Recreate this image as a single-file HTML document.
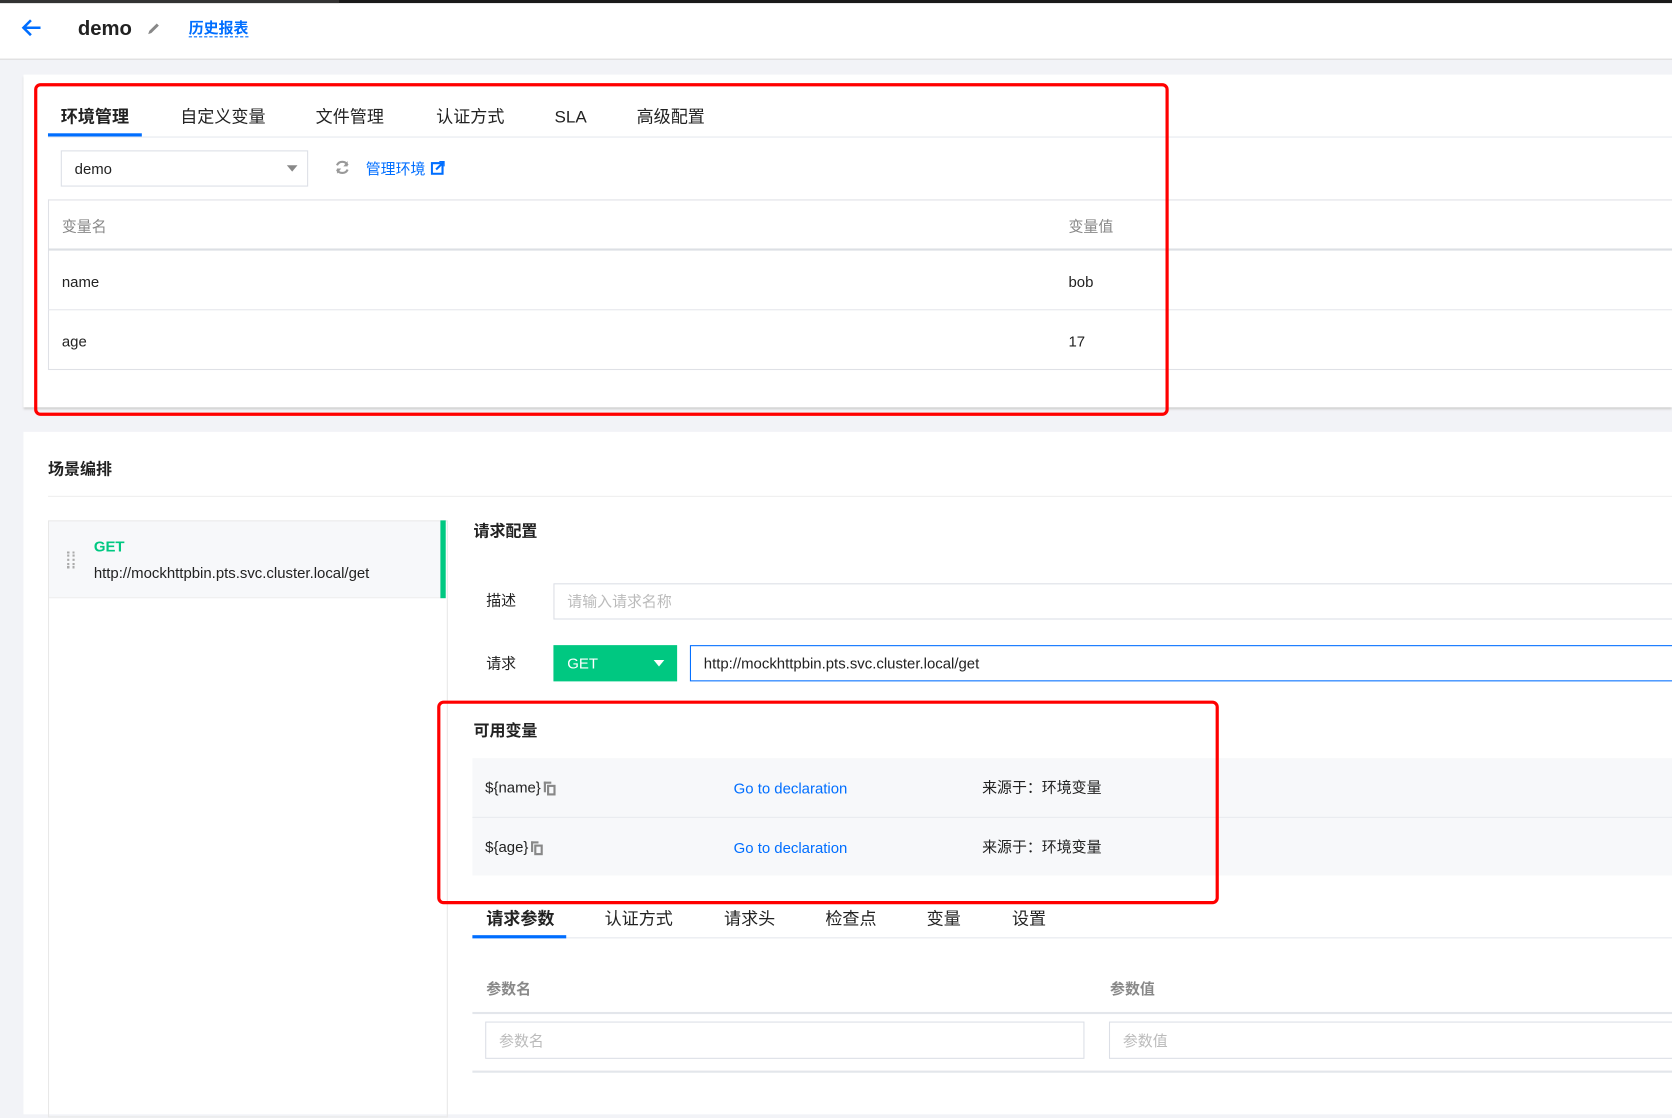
<!DOCTYPE html>
<html><head><meta charset="utf-8"><style>
*{box-sizing:border-box;margin:0;padding:0}
html,body{width:1672px;height:1083px;overflow:hidden;background:#f2f3f7}
body{font-family:"Liberation Sans","Noto Sans CJK SC",sans-serif;color:#222}
#w{position:absolute;left:0;top:0;width:1568px;height:1016px;transform:scale(1.06633);transform-origin:0 0}
.a{position:absolute;white-space:nowrap}
.t{font-size:14px;line-height:14px}
.blue{color:#006eff}
.gray{color:#888}
.b{font-weight:bold}
</style></head><body><div id="w">
<div class="a" style="left:0;top:0;width:1568px;height:3px;background:#1a1a1a"></div>
<div class="a" style="left:0;top:0;width:318px;height:3px;background:#333"></div>
<div class="a" style="left:0;top:3px;width:1568px;height:53px;background:#fff;border-bottom:1px solid #d8d8d8"></div>
<svg class="a" style="left:20px;top:17px" width="20" height="18" viewBox="0 0 20 18"><path d="M18 9H3M9 2L2 9l7 7" stroke="#006eff" stroke-width="2.4" fill="none"/></svg>
<div class="a b" style="left:73px;top:18px;font-size:19px;line-height:20px">demo</div>
<svg class="a" style="left:137px;top:20px" width="14" height="14" viewBox="0 0 14 14"><path d="M2 12l1-3 7-7 2 2-7 7z" fill="#888"/></svg>
<div class="a b blue" style="left:177px;top:18px;font-size:14px;line-height:16px;border-bottom:1px dashed #006eff">历史报表</div>

<div class="a" style="left:22px;top:70px;width:1546px;height:312px;background:#fff;box-shadow:0 2px 2px #ccc"></div>
<div class="a" style="left:45px;top:128px;width:1523px;height:1px;background:#e5e8ee"></div>
<div class="a" style="left:45px;top:125px;width:88px;height:3px;background:#006eff"></div>
<div class="a b" style="left:57px;top:102px;font-size:16px;line-height:18px">环境管理</div>
<div class="a" style="left:169px;top:102px;font-size:16px;line-height:18px">自定义变量</div>
<div class="a" style="left:296px;top:102px;font-size:16px;line-height:18px">文件管理</div>
<div class="a" style="left:409px;top:102px;font-size:16px;line-height:18px">认证方式</div>
<div class="a" style="left:520px;top:102px;font-size:16px;line-height:18px">SLA</div>
<div class="a" style="left:597px;top:102px;font-size:16px;line-height:18px">高级配置</div>
<div class="a" style="left:57px;top:141px;width:232px;height:34px;border:1px solid #dcdfe6"></div>
<div class="a t" style="left:70px;top:151px">demo</div>
<div class="a" style="left:269px;top:155px;border:5px solid transparent;border-top:6px solid #888"></div>
<svg class="a" style="left:313px;top:149px" width="16" height="16" viewBox="0 0 16 16"><path d="M13 6A5.5 5.5 0 0 0 3 6M3 10a5.5 5.5 0 0 0 10 0" stroke="#999" stroke-width="2" fill="none"/><path d="M13 2v5H9z M3 14V9h4z" fill="#999"/></svg>
<div class="a t blue" style="left:343px;top:151px">管理环境</div>
<svg class="a" style="left:404px;top:151px" width="13" height="13" viewBox="0 0 13 13"><rect x="1" y="2" width="10" height="10" fill="none" stroke="#006eff" stroke-width="2"/><path d="M5 8L12 1M8 0h5v5" stroke="#006eff" stroke-width="2" fill="none"/></svg>
<div class="a" style="left:45px;top:187px;width:1523px;height:160px;border:1px solid #dfe1e6;border-right:none"></div>
<div class="a" style="left:45px;top:233px;width:1523px;height:2px;background:#dcdfe4"></div>
<div class="a" style="left:45px;top:290px;width:1523px;height:1px;background:#e5e6ec"></div>
<div class="a t gray" style="left:58px;top:205px">变量名</div>
<div class="a t gray" style="left:1002px;top:205px">变量值</div>
<div class="a t" style="left:58px;top:257px">name</div>
<div class="a t" style="left:1002px;top:257px">bob</div>
<div class="a t" style="left:58px;top:313px">age</div>
<div class="a t" style="left:1002px;top:313px">17</div>
<div class="a" style="left:32px;top:78px;width:1064px;height:312px;border:3px solid #f00;border-radius:6px"></div>

<div class="a" style="left:22px;top:405px;width:1546px;height:640px;background:#fff"></div>
<div class="a b" style="left:45px;top:433px;font-size:15px;line-height:16px">场景编排</div>
<div class="a" style="left:45px;top:465px;width:1523px;height:1px;background:#eee"></div>
<div class="a" style="left:45px;top:488px;width:375px;height:560px;border:1px solid #e8e8e8"></div>
<div class="a" style="left:46px;top:489px;width:368px;height:72px;background:#f7f8fa;border-bottom:1px solid #eee"></div>
<div class="a" style="left:413px;top:488px;width:5px;height:73px;background:#00c881"></div>
<div class="a" style="left:63px;top:517px;width:2px;height:16px;border-left:2px dotted #aaa"></div>
<div class="a" style="left:68px;top:517px;width:2px;height:16px;border-left:2px dotted #aaa"></div>
<div class="a b" style="left:88px;top:504px;font-size:14px;color:#00c881">GET</div>
<div class="a t" style="left:88px;top:530px">http://mockhttpbin.pts.svc.cluster.local/get</div>

<div class="a b" style="left:444px;top:491px;font-size:15px;line-height:16px">请求配置</div>
<div class="a t" style="left:456px;top:556px">描述</div>
<div class="a" style="left:519px;top:547px;width:1060px;height:34px;border:1px solid #dcdfe6"></div>
<div class="a t" style="left:532px;top:557px;color:#bbb">请输入请求名称</div>
<div class="a t" style="left:456px;top:615px">请求</div>
<div class="a" style="left:519px;top:605px;width:116px;height:34px;background:#00c881"></div>
<div class="a t" style="left:532px;top:615px;color:#fff">GET</div>
<div class="a" style="left:613px;top:619px;border:5px solid transparent;border-top:6px solid #fff"></div>
<div class="a" style="left:647px;top:605px;width:930px;height:34px;border:1px solid #006eff"></div>
<div class="a t" style="left:660px;top:615px">http://mockhttpbin.pts.svc.cluster.local/get</div>

<div class="a b" style="left:444px;top:678px;font-size:15px;line-height:16px">可用变量</div>
<div class="a" style="left:443px;top:711px;width:1125px;height:110px;background:#f7f8fa"></div>
<div class="a" style="left:443px;top:766px;width:1125px;height:1px;background:#e8eaee"></div>
<div class="a t" style="left:455px;top:731px">${name}</div>
<div class="a" style="left:510px;top:733px;width:7px;height:10px;border:2px solid #888;border-right:none;border-bottom:none"></div>
<div class="a" style="left:513px;top:736px;width:8px;height:10px;border:2px solid #888"></div>
<div class="a t" style="left:455px;top:787px">${age}</div>
<div class="a" style="left:498px;top:789px;width:7px;height:10px;border:2px solid #888;border-right:none;border-bottom:none"></div>
<div class="a" style="left:501px;top:792px;width:8px;height:10px;border:2px solid #888"></div>
<div class="a t blue" style="left:688px;top:732px">Go to declaration</div>
<div class="a t blue" style="left:688px;top:788px">Go to declaration</div>
<div class="a t" style="left:921px;top:731px">来源于：环境变量</div>
<div class="a t" style="left:921px;top:787px">来源于：环境变量</div>
<div class="a" style="left:410px;top:657px;width:733px;height:191px;border:3px solid #f00;border-radius:6px"></div>

<div class="a" style="left:443px;top:879px;width:1125px;height:1px;background:#e5e8ee"></div>
<div class="a" style="left:443px;top:877px;width:88px;height:3px;background:#006eff"></div>
<div class="a b" style="left:456px;top:854px;font-size:16px;line-height:18px">请求参数</div>
<div class="a" style="left:567px;top:854px;font-size:16px;line-height:18px">认证方式</div>
<div class="a" style="left:679px;top:854px;font-size:16px;line-height:18px">请求头</div>
<div class="a" style="left:774px;top:854px;font-size:16px;line-height:18px">检查点</div>
<div class="a" style="left:869px;top:854px;font-size:16px;line-height:18px">变量</div>
<div class="a" style="left:949px;top:854px;font-size:16px;line-height:18px">设置</div>
<div class="a t b gray" style="left:456px;top:920px">参数名</div>
<div class="a t b gray" style="left:1041px;top:920px">参数值</div>
<div class="a" style="left:443px;top:949px;width:1125px;height:2px;background:#e3e6eb"></div>
<div class="a" style="left:455px;top:958px;width:562px;height:35px;border:1px solid #dcdfe6"></div>
<div class="a t" style="left:468px;top:969px;color:#bbb">参数名</div>
<div class="a" style="left:1040px;top:958px;width:540px;height:35px;border:1px solid #dcdfe6"></div>
<div class="a t" style="left:1053px;top:969px;color:#bbb">参数值</div>
<div class="a" style="left:443px;top:1004px;width:1125px;height:2px;background:#e3e6eb"></div>
</div></body></html>
